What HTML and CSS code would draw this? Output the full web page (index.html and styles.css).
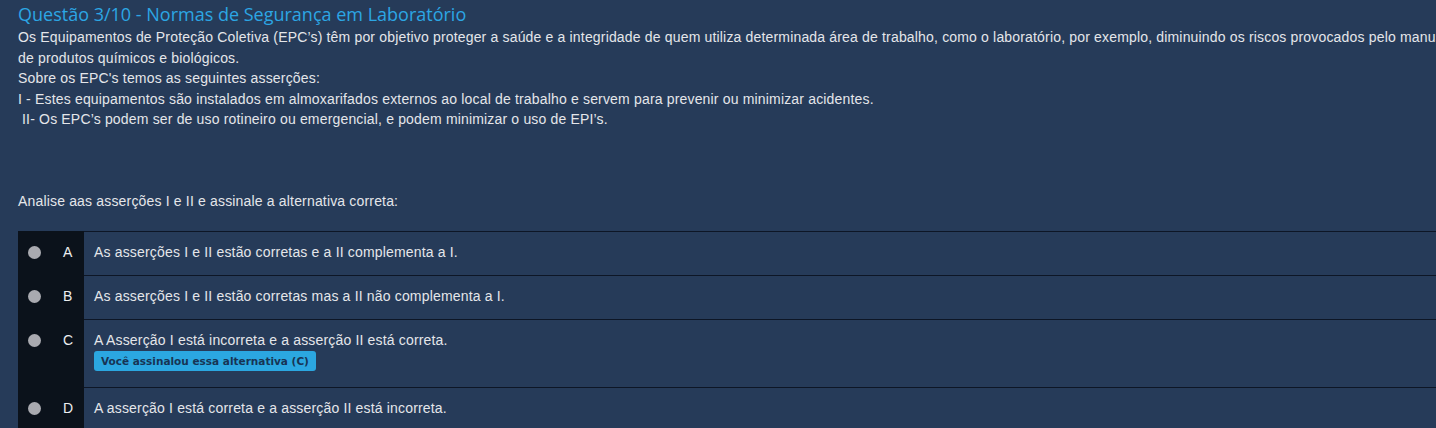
FILE: index.html
```html
<!DOCTYPE html>
<html lang="pt">
<head>
<meta charset="utf-8">
<title>Questão 3/10</title>
<link rel="stylesheet" href="styles.css">
</head>
<body>
<div class="page">
  <h1 class="title">Questão 3/10 - Normas de Segurança em Laboratório</h1>
  <div class="statement">
    <p class="line">Os Equipamentos de Proteção Coletiva (EPC’s) têm por objetivo proteger a saúde e a integridade de quem utiliza determinada área de trabalho, como o laboratório, por exemplo, diminuindo os riscos provocados pelo manuseio de produtos químicos e biológicos.</p>
    <p class="line">Sobre os EPC's temos as seguintes asserções:</p>
    <p class="line">I - Estes equipamentos são instalados em almoxarifados externos ao local de trabalho e servem para prevenir ou minimizar acidentes.</p>
    <p class="line">&nbsp;II- Os EPC’s podem ser de uso rotineiro ou emergencial, e podem minimizar o uso de EPI’s.</p>
    <p class="line prompt">Analise aas asserções I e II e assinale a alternativa correta:</p>
  </div>
  <div class="options">
    <div class="option">
      <div class="mark"><span class="dot"></span><span class="letter">A</span></div>
      <div class="body"><div class="text">As asserções I e II estão corretas e a II complementa a I.</div></div>
    </div>
    <div class="option">
      <div class="mark"><span class="dot"></span><span class="letter">B</span></div>
      <div class="body"><div class="text">As asserções I e II estão corretas mas a II não complementa a I.</div></div>
    </div>
    <div class="option">
      <div class="mark"><span class="dot"></span><span class="letter">C</span></div>
      <div class="body body-chosen"><div class="text">A Asserção I está incorreta e a asserção II está correta.</div><span class="badge">Você assinalou essa alternativa (C)</span></div>
    </div>
    <div class="option">
      <div class="mark"><span class="dot"></span><span class="letter">D</span></div>
      <div class="body"><div class="text">A asserção I está correta e a asserção II está incorreta.</div></div>
    </div>
  </div>
</div>
</body>
</html>
```

FILE: styles.css
```css
html, body {
  margin: 0;
  padding: 0;
  background: #263b59;
  overflow: hidden;
}
.page {
  width: 1600px;
  padding: 3px 0 0 18px;
  font-family: "Liberation Sans", Arial, sans-serif;
  font-size: 14px;
  letter-spacing: 0.17px;
  color: #e4e6ea;
}
.title {
  margin: 0;
  font-family: "Open Sans", "Liberation Sans", sans-serif;
  font-weight: 400;
  font-size: 18px;
  line-height: 22px;
  letter-spacing: 0;
  color: #2ca6e4;
}
.statement {
  width: 1456px;
  margin-top: 2px;
}
.line {
  margin: 0;
  line-height: 20.5px;
}
.prompt {
  margin-top: 61.5px;
}
.options {
  margin-top: 19px;
  width: 1500px;
}
.option {
  display: flex;
}
.mark {
  width: 66px;
  flex: none;
  background: #0b121b;
  display: flex;
  align-items: flex-start;
  padding-top: 11px;
  box-sizing: border-box;
  padding-left: 10px;
}
.dot {
  width: 13px;
  height: 13px;
  border-radius: 50%;
  background: #a9aab0;
  margin-top: 4px;
}
.letter {
  margin-left: 22px;
  line-height: 20px;
  color: #eceef0;
}
.body {
  flex: 1;
  border-top: 1px solid #0d1626;
  padding: 10px 10px 13px;
}
.body-chosen {
  padding-bottom: 16px;
}
.text {
  line-height: 20px;
}
.badge {
  display: inline-block;
  margin-top: 1px;
  height: 20px;
  line-height: 20px;
  padding: 0 7px;
  border-radius: 3px;
  background: #2ba7e1;
  color: #173454;
  font-family: "DejaVu Sans", Verdana, sans-serif;
  font-weight: 700;
  font-size: 10.5px;
  letter-spacing: 0;
}
```
